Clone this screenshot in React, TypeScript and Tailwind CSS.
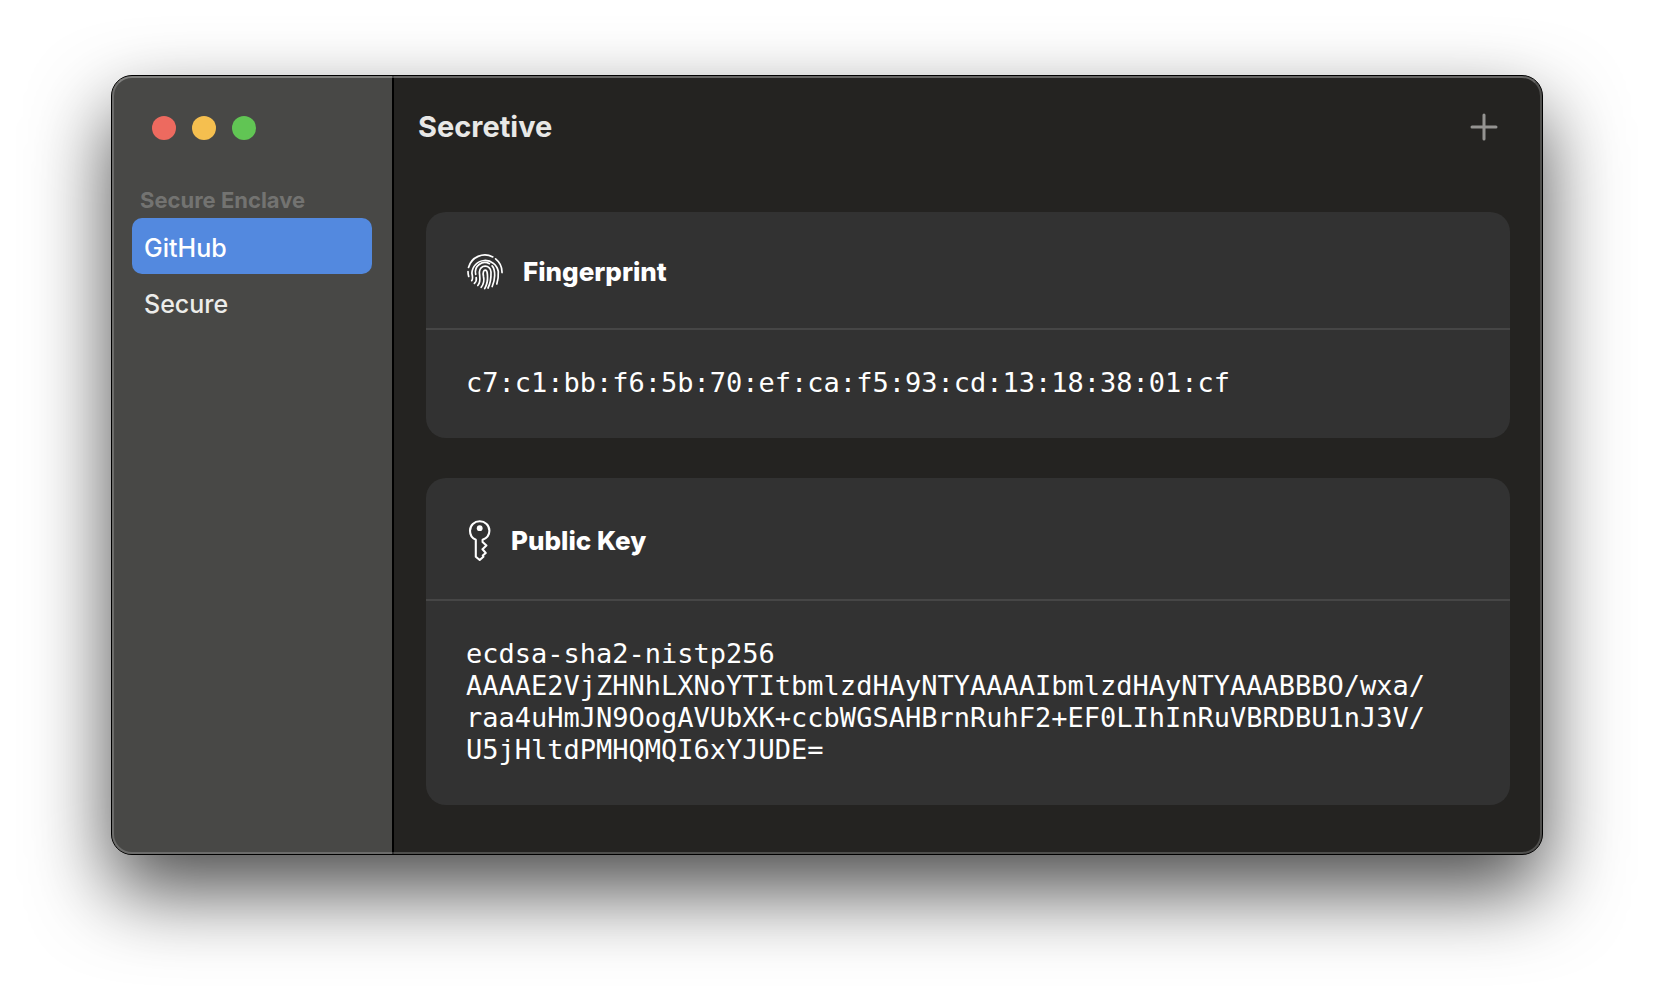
import type { ReactNode } from "react";

const keys = ["GitHub", "Secure"];

function FingerprintIcon() {
  return (
    <svg viewBox="-1 0 37 36" className="h-9 w-[37px] shrink-0" fill="none" stroke="currentColor" strokeWidth="1.7" strokeLinecap="round" aria-hidden="true">
      <path d="M1.500 13.500A17 17 0 0 1 25.800 2.900" />
      <path d="M28.600 4.800A17 17 0 0 1 35 18.600" />
      <path d="M1 17.500C1 19.500 1.200 21 1.700 22.500" />
      <path d="M4.700 26.700C6.300 25 5.500 22 4.900 19.300A13.300 13.300 0 0 1 31.300 17.500C31.500 22 31 26.500 29.800 30" />
      <path d="M7.400 29.400C9.500 27.500 9.600 25.500 9.200 23.500" />
      <path d="M8.700 20.300A9.500 9.500 0 0 1 22.500 9.700" />
      <path d="M25.100 11.800C29 16 28 26.500 25.200 32.500" />
      <path d="M10.800 31.500C14.500 27.500 12.400 22 12.400 18A5.800 5.800 0 0 1 24 18C24.200 24 23.300 29.500 21 34" />
      <path d="M14.200 33.300C17.200 29.500 17.400 26.500 16.500 22.500C15.500 17.500 17 16.200 18.200 16.200C20.600 16.200 20.200 18.500 20.500 22C20.800 26.500 19.800 31 17.700 34.600" />
    </svg>
  );
}

function KeyIcon() {
  return (
    <svg viewBox="0 0 25 41" className="h-[41px] w-[25px] shrink-0" fill="none" stroke="currentColor" strokeWidth="2.100" strokeLinejoin="round" aria-hidden="true">
      <path d="M9.800 19.700C6.200 18.200 4 14.700 4 10.700C4 5.400 8.300 1.200 13.700 1.200S23.400 5.400 23.400 10.700C23.400 14.700 20.500 18.200 16.600 19.800V22L20.400 25.600L16.500 29.300L19.700 32.900L16.800 35.600L17.400 36.800L13.700 40L9.800 36.800Z" />
      <circle cx="13.700" cy="8.200" r="2.900" fill="currentColor" stroke="none" />
    </svg>
  );
}

function Card({ icon, title, children }: { icon: ReactNode; title: string; children: ReactNode }) {
  return (
    <section className="rounded-[20px] bg-[#323232] text-white">
      <header className="flex items-center gap-5 border-b-2 border-[#464646] px-10 pt-[42px] pb-[38px]">
        {icon}
        <h2 className="text-[26px] leading-9 font-extrabold">{title}</h2>
      </header>
      <p className="px-10 pt-[37px] pb-[39px] font-['DejaVu_Sans_Mono',monospace] text-[27px] leading-8">{children}</p>
    </section>
  );
}

export default function App() {
  return (
    <div className="min-h-screen bg-white px-[111px] pt-[75px] pb-[147px] font-['Inter',sans-serif]">
      <div className="relative flex min-h-[780px] rounded-[21px] border border-black bg-[#242321] shadow-[0_36px_80px_rgba(0,0,0,0.7)]">
        <aside className="w-[282px] shrink-0 rounded-l-[20px] border-r-2 border-black bg-[#484846] px-5 pt-10">
          <div className="flex gap-4 px-5">
            <button aria-label="Close" className="size-6 rounded-full bg-[#ed6a5f]" />
            <button aria-label="Minimize" className="size-6 rounded-full bg-[#f5bf4f]" />
            <button aria-label="Zoom" className="size-6 rounded-full bg-[#61c554]" />
          </div>
          <h2 className="mt-11 px-2 text-[22px] leading-8 font-bold text-[#737371]">Secure Enclave</h2>
          <nav className="mt-0.5 flex flex-col">
            {keys.map((name, i) => (
              <button
                key={name}
                className={
                  i === 0
                    ? "h-14 rounded-[10px] bg-[#5389df] px-3 pt-1 text-left text-[25px] leading-8 font-medium text-white"
                    : "h-14 rounded-[10px] px-3 pt-1 text-left text-[25px] leading-8 font-medium text-[#ececea]"
                }
              >
                {name}
              </button>
            ))}
          </nav>
        </aside>
        <main className="min-w-0 flex-1 px-8 pb-12">
          <div className="-ml-2 flex h-[102px] items-center justify-between pr-3">
            <h1 className="text-[29px] font-bold text-[#e8e8e7]">Secretive</h1>
            <button aria-label="Add key" className="text-[#949391]">
              <svg viewBox="0 0 28 28" className="size-7" fill="none" stroke="currentColor" strokeWidth="3" strokeLinecap="round">
                <path d="M14 2v24M2 14h24" />
              </svg>
            </button>
          </div>
          <div className="mt-[34px] flex flex-col gap-10">
            <Card icon={<FingerprintIcon />} title="Fingerprint">
              c7:c1:bb:f6:5b:70:ef:ca:f5:93:cd:13:18:38:01:cf
            </Card>
            <Card icon={<KeyIcon />} title="Public Key">
              ecdsa-sha2-nistp256 AAAAE2VjZHNhLXNoYTItbmlzdHAyNTYAAAAIbmlzdHAyNTYAAABBBO/wxa/
              <wbr />
              raa4uHmJN9OogAVUbXK+ccbWGSAHBrnRuhF2+EF0LIhInRuVBRDBU1nJ3V/
              <wbr />
              U5jHltdPMHQMQI6xYJUDE=
            </Card>
          </div>
        </main>
        <div className="pointer-events-none absolute inset-0 rounded-[20px] border-2 border-white/20 border-t-white/30" />
      </div>
    </div>
  );
}
